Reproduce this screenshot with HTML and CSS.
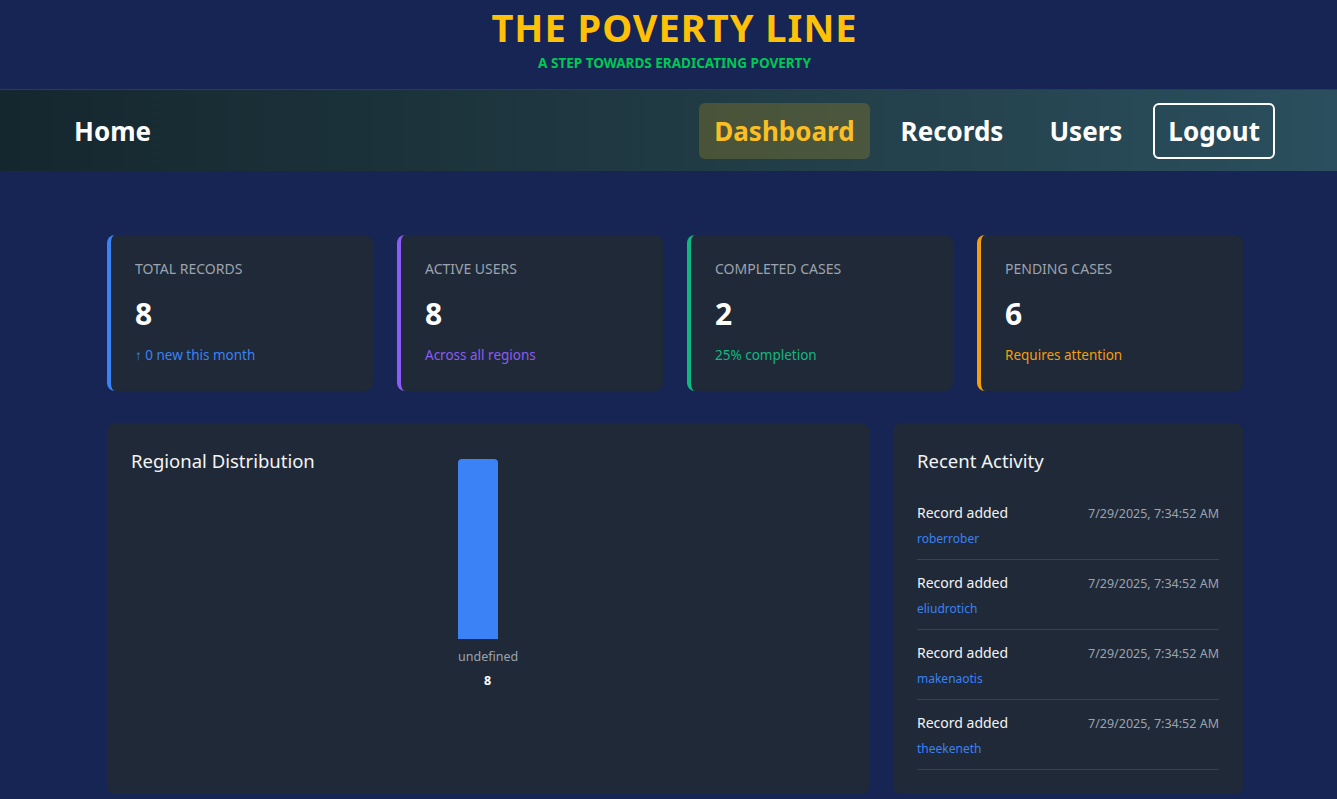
FILE: index.html
```html
<!DOCTYPE html>
<html lang="en">
<head>
<meta charset="utf-8">
<title>The Poverty Line - Dashboard</title>
<link rel="stylesheet" href="styles.css">
</head>
<body>
<header class="site-header">
  <h1 class="site-title">THE POVERTY LINE</h1>
  <p class="site-tagline">A STEP TOWARDS ERADICATING POVERTY</p>
</header>
<nav class="navbar">
  <a class="nav-link" href="#">Home</a>
  <div class="nav-right">
    <a class="nav-link active" href="#">Dashboard</a>
    <a class="nav-link" href="#">Records</a>
    <a class="nav-link" href="#">Users</a>
    <a class="nav-link logout" href="#">Logout</a>
  </div>
</nav>
<main class="main">
  <section class="stats">
    <div class="stat-card blue">
      <div class="stat-label">TOTAL RECORDS</div>
      <div class="stat-value">8</div>
      <div class="stat-sub">↑ 0 new this month</div>
    </div>
    <div class="stat-card purple">
      <div class="stat-label">ACTIVE USERS</div>
      <div class="stat-value">8</div>
      <div class="stat-sub">Across all regions</div>
    </div>
    <div class="stat-card green">
      <div class="stat-label">COMPLETED CASES</div>
      <div class="stat-value">2</div>
      <div class="stat-sub">25% completion</div>
    </div>
    <div class="stat-card orange">
      <div class="stat-label">PENDING CASES</div>
      <div class="stat-value">6</div>
      <div class="stat-sub">Requires attention</div>
    </div>
  </section>
  <section class="panels">
    <div class="panel chart-panel">
      <h2 class="panel-title chart-title">Regional Distribution</h2>
      <div class="chart">
        <div class="chart-col">
          <div class="bar" style="height:180px"></div>
          <div class="bar-label">undefined</div>
          <div class="bar-value">8</div>
        </div>
      </div>
    </div>
    <div class="panel activity-panel">
      <h2 class="panel-title">Recent Activity</h2>
      <ul class="activity-list">
        <li class="activity-item">
          <div class="activity-row"><span class="activity-action">Record added</span><span class="activity-time">7/29/2025, 7:34:52 AM</span></div>
          <div class="activity-user">roberrober</div>
        </li>
        <li class="activity-item">
          <div class="activity-row"><span class="activity-action">Record added</span><span class="activity-time">7/29/2025, 7:34:52 AM</span></div>
          <div class="activity-user">eliudrotich</div>
        </li>
        <li class="activity-item">
          <div class="activity-row"><span class="activity-action">Record added</span><span class="activity-time">7/29/2025, 7:34:52 AM</span></div>
          <div class="activity-user">makenaotis</div>
        </li>
        <li class="activity-item">
          <div class="activity-row"><span class="activity-action">Record added</span><span class="activity-time">7/29/2025, 7:34:52 AM</span></div>
          <div class="activity-user">theekeneth</div>
        </li>
      </ul>
    </div>
  </section>
</main>
</body>
</html>
```

FILE: styles.css
```css
* { box-sizing: border-box; }
html, body { margin: 0; padding: 0; }
body {
  background: #172554;
  font-family: "Noto Sans", "Open Sans", sans-serif;
  color: #fff;
  height: 799px;
  overflow: hidden;
}
.site-header {
  text-align: center;
  padding: 4px 0 16px 12px;
  border-bottom: 1px solid #25358a;
}
.site-title {
  margin: 0;
  font-size: 38px;
  line-height: 46px;
  font-weight: 700;
  letter-spacing: 1px;
  color: #ffc107;
}
.site-tagline {
  margin: 3px 0 0;
  font-size: 13.5px;
  line-height: 20px;
  font-weight: 700;
  color: #00c853;
}
.navbar {
  display: flex;
  justify-content: space-between;
  align-items: center;
  height: 81px;
  padding: 0 62px 0 59px;
  background: linear-gradient(90deg, #15272e 0%, #203a43 50%, #2b4f5e 100%);
}
.nav-right {
  display: flex;
  align-items: center;
  gap: 16px;
}
.nav-link {
  display: block;
  padding: 8px 13px;
  font-size: 26px;
  line-height: 36px;
  font-weight: 700;
  color: #fff;
  text-decoration: none;
  border: 2px solid transparent;
  border-radius: 6px;
}
.nav-link.active {
  color: #fbbf24;
  background: rgba(255, 193, 7, 0.18);
}
.nav-link.logout {
  border-color: #fff;
}
.main {
  padding: 64px 94px 0 107px;
}
.stats {
  display: grid;
  grid-template-columns: repeat(4, 1fr);
  gap: 24px;
}
.stat-card {
  background: #1f2937;
  border-radius: 8px;
  border-left: 4px solid;
  padding: 24px 24px 26px;
  height: 156px;
}
.stat-card.blue { border-color: #3b82f6; }
.stat-card.purple { border-color: #8b5cf6; }
.stat-card.green { border-color: #10b981; }
.stat-card.orange { border-color: #f59e0b; }
.stat-label {
  font-size: 14px;
  line-height: 20px;
  color: #9ca3af;
}
.stat-value {
  margin-top: 16px;
  font-size: 30px;
  line-height: 38px;
  font-weight: 700;
  color: #fff;
}
.stat-sub {
  margin-top: 12px;
  font-size: 13.5px;
  line-height: 20px;
}
.blue .stat-sub { color: #3b82f6; }
.purple .stat-sub { color: #8b5cf6; }
.green .stat-sub { color: #10b981; }
.orange .stat-sub { color: #f59e0b; }
.panels {
  display: grid;
  grid-template-columns: 1fr 350px;
  gap: 24px;
  margin-top: 32px;
}
.panel {
  background: #1f2937;
  border-radius: 8px;
  padding: 24px;
}
.panel-title {
  margin: 0 0 16px;
  font-size: 18.5px;
  line-height: 27px;
  font-weight: 400;
  color: #f3f4f6;
}
.chart-panel {
  display: flex;
  align-items: flex-start;
}
.chart-title {
  flex: 0 0 184px;
}
.chart {
  display: flex;
  margin-left: 143px;
  padding-top: 12px;
}
.chart-col {
  display: flex;
  flex-direction: column;
  align-items: flex-start;
  width: 59px;
}
.bar {
  width: 40px;
  background: #3b82f6;
  border-radius: 4px 4px 0 0;
}
.bar-label {
  align-self: stretch;
  text-align: center;
  margin-top: 8px;
  font-size: 12.5px;
  line-height: 20px;
  color: #9ca3af;
}
.bar-value {
  align-self: stretch;
  text-align: center;
  margin-top: 6px;
  font-size: 12.5px;
  line-height: 16px;
  font-weight: 700;
  color: #fff;
}
.activity-list {
  list-style: none;
  margin: 0;
  padding: 0;
}
.activity-item {
  padding: 13px 0 12px;
  border-bottom: 1px solid #374151;
}
.activity-row {
  display: flex;
  justify-content: space-between;
  align-items: baseline;
}
.activity-action {
  font-size: 14px;
  line-height: 20px;
  color: #f3f4f6;
}
.activity-time {
  font-size: 12.5px;
  color: #9ca3af;
}
.activity-user {
  margin-top: 8px;
  font-size: 12px;
  line-height: 16px;
  color: #3b82f6;
}
```
